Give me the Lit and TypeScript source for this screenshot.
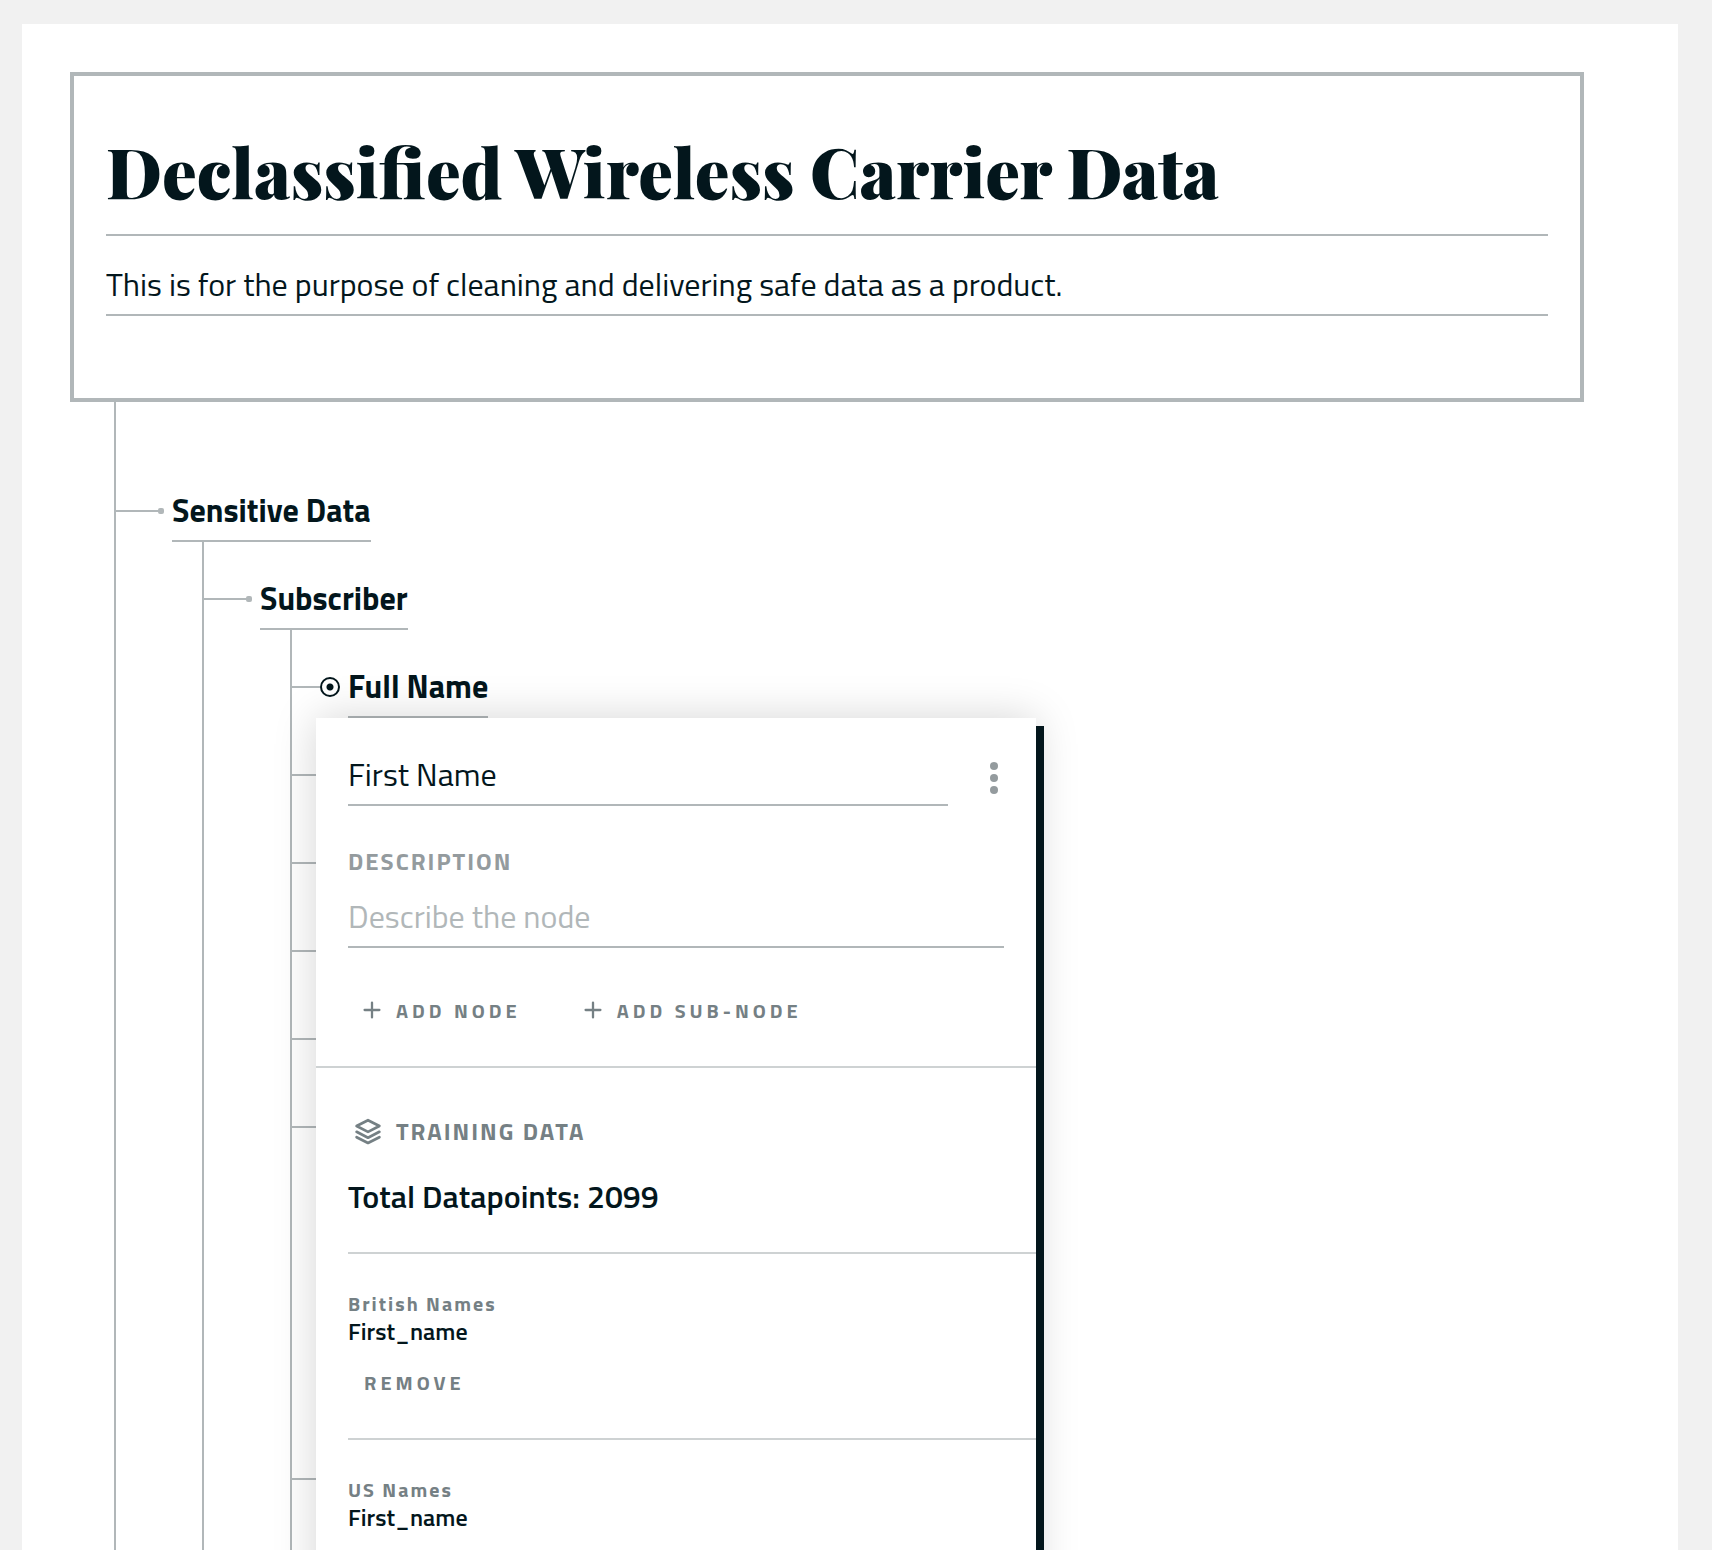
import { LitElement, html, css, svg, nothing, TemplateResult } from "lit";
import { customElement, property } from "lit/decorators.js";
import { classMap } from "lit/directives/class-map.js";

interface TreeNode {
  name?: string;
  selected?: boolean;
  open?: boolean;
  children?: TreeNode[];
}

interface Dataset {
  source: string;
  field: string;
  removable: boolean;
}

const TREE: TreeNode[] = [
  {
    name: "Sensitive Data",
    children: [
      {
        name: "Subscriber",
        children: [
          { name: "Full Name", selected: true },
          { open: true },
          {},
          {},
          {},
          { children: [{}, {}, {}] },
          {},
        ],
      },
    ],
  },
];

const DATASETS: Dataset[] = [
  { source: "British Names", field: "First_name", removable: true },
  { source: "US Names", field: "First_name", removable: false },
];

const plusIcon = svg`<svg class="icon" width="24" height="24" viewBox="0 0 24 24" fill="none" stroke="currentColor" stroke-width="2.3" stroke-linecap="round" aria-hidden="true"><path d="M12 4.6v14.8M4.6 12h14.8"/></svg>`;

const layersIcon = svg`<svg class="icon" width="32" height="32" viewBox="0 0 32 32" fill="none" stroke="currentColor" stroke-width="2.7" stroke-linejoin="round" stroke-linecap="round" aria-hidden="true"><path d="M16 5.2 27.4 11 16 16.9 4.6 11z"/><path d="M4.6 16.8 16 22.7l11.4-5.9"/><path d="M4.6 22.2 16 28l11.4-5.8"/></svg>`;

const moreIcon = svg`<svg class="icon" width="20" height="32" viewBox="0 0 20 32" fill="currentColor" aria-hidden="true"><circle cx="10" cy="4" r="4"/><circle cx="10" cy="16" r="4"/><circle cx="10" cy="28" r="4"/></svg>`;

const shared = css`
  *,
  *::before {
    box-sizing: border-box;
  }
  input,
  button {
    margin: 0;
    padding: 0;
    border: 0;
    border-radius: 0;
    background: none;
    font: inherit;
    color: inherit;
    outline: none;
  }
  button {
    cursor: pointer;
  }
  .field {
    display: block;
    width: 100%;
    min-width: 0;
    height: 56px;
    padding-bottom: 6px;
    border-bottom: 2px solid var(--line);
    font-size: 32px;
    line-height: 48px;
  }
  .field::placeholder {
    color: var(--line);
    opacity: 1;
  }
`;

@customElement("node-panel")
export class NodePanel extends LitElement {
  static styles = [
    shared,
    css`
      :host {
        display: block;
        min-height: 100vh;
        background: #fff;
        box-shadow: 8px 8px 0 var(--ink), 0 0 40px rgba(0, 0, 0, 0.17);
      }
      .details {
        padding: 32px 32px 36px;
        border-bottom: 2px solid var(--rule);
      }
      .name-row {
        display: grid;
        grid-template-columns: 1fr 56px;
      }
      .more {
        display: flex;
        align-items: center;
        justify-content: flex-end;
        color: var(--soft);
      }
      .icon {
        display: block;
        flex: none;
      }
      .label {
        display: block;
        margin: 40px 0 16px;
        color: var(--soft);
      }
      .label,
      .section-title {
        font-size: 24px;
        font-weight: 700;
        line-height: 30px;
        letter-spacing: 2px;
      }
      .actions {
        display: flex;
        gap: 36px;
        margin-top: 42px;
      }
      .action {
        display: flex;
        align-items: center;
        gap: 12px;
        height: 40px;
        padding: 0 12px;
        color: var(--muted);
        font-size: 20px;
        font-weight: 700;
        letter-spacing: 4px;
      }
      .action.text {
        margin-top: 18px;
        padding: 0 16px;
      }
      .training {
        padding-left: 32px;
      }
      .summary {
        padding: 48px 0 30px;
        border-bottom: 2px solid var(--rule);
      }
      .section-title {
        display: flex;
        align-items: center;
        gap: 12px;
        height: 30px;
        margin: 0;
        padding-left: 4px;
        color: var(--muted);
      }
      .total {
        margin: 24px 0 0;
        font-size: 32px;
        font-weight: 600;
        line-height: 52px;
      }
      .sets {
        margin: 0;
        padding: 0;
        list-style: none;
      }
      .set {
        padding: 36px 0;
      }
      .set:not(:last-child) {
        border-bottom: 2px solid var(--rule);
      }
      .source,
      .target {
        margin: 0;
      }
      .source {
        color: var(--muted);
        font-size: 20px;
        font-weight: 700;
        line-height: 28px;
        letter-spacing: 2px;
      }
      .target {
        font-size: 24px;
        font-weight: 600;
        line-height: 26px;
      }
    `,
  ];

  render() {
    return html`
      <section class="details">
        <div class="name-row">
          <input class="field" type="text" aria-label="Node name" .value=${"First Name"} />
          <button class="more" type="button" aria-label="More options">${moreIcon}</button>
        </div>
        <label class="label" for="description">DESCRIPTION</label>
        <input class="field" id="description" type="text" placeholder="Describe the node" />
        <div class="actions">
          <button class="action" type="button">${plusIcon}<span>ADD NODE</span></button>
          <button class="action" type="button">${plusIcon}<span>ADD SUB-NODE</span></button>
        </div>
      </section>
      <section class="training">
        <div class="summary">
          <h2 class="section-title">${layersIcon}<span>TRAINING DATA</span></h2>
          <p class="total">Total Datapoints: 2099</p>
        </div>
        <ul class="sets">
          ${DATASETS.map(
            (d) => html`<li class="set">
              <p class="source">${d.source}</p>
              <p class="target">${d.field}</p>
              ${d.removable ? html`<button class="action text" type="button">REMOVE</button>` : nothing}
            </li>`
          )}
        </ul>
      </section>
    `;
  }
}

@customElement("node-tree")
export class NodeTree extends LitElement {
  @property({ attribute: false }) nodes: TreeNode[] = [];

  static styles = [
    shared,
    css`
      :host {
        display: flex;
        flex-direction: column;
        flex: 1;
        padding-left: 44px;
      }
      .branch {
        margin: 0 0 0 86px;
        padding: 0;
        border-left: 2px solid var(--line);
        list-style: none;
      }
      .branch.root {
        flex: 1;
        margin-left: 0;
        padding-top: 52px;
      }
      .node {
        position: relative;
        padding-top: 32px;
      }
      .node:last-child > .branch {
        min-height: 100vh;
      }
      .row {
        display: flex;
        height: 56px;
      }
      .stub {
        display: flex;
        align-items: center;
        width: 48px;
        height: 50px;
        margin-right: 8px;
      }
      .stub::before {
        content: "";
        flex: 1;
        height: 2px;
        background: var(--line);
      }
      .dot {
        width: 6px;
        height: 6px;
        border-radius: 2px;
        background: var(--line);
      }
      .radio {
        appearance: none;
        width: 20px;
        height: 20px;
        border: 2px solid var(--ink);
        border-radius: 50%;
        background: radial-gradient(circle, var(--ink) 0 3px, transparent 4px);
      }
      .name {
        border-bottom: 2px solid var(--line);
        padding-bottom: 6px;
        font-size: 32px;
        font-weight: 700;
        line-height: 48px;
      }
      .panel {
        position: absolute;
        top: 0;
        left: 24px;
        z-index: 1;
        width: 720px;
      }
    `,
  ];

  private renderNode(node: TreeNode): TemplateResult {
    return html`<li class="node">
      <div class="row">
        <span class="stub">
          ${node.selected
            ? html`<input class="radio" type="radio" checked aria-label=${node.name ?? ""} />`
            : html`<span class="dot"></span>`}
        </span>
        ${node.name ? html`<button class="name" type="button">${node.name}</button>` : nothing}
      </div>
      ${node.open ? html`<node-panel class="panel"></node-panel>` : nothing}
      ${node.children ? this.renderBranch(node.children) : nothing}
    </li>`;
  }

  private renderBranch(nodes: TreeNode[], root = false): TemplateResult {
    return html`<ul class=${classMap({ branch: true, root })}>
      ${nodes.map((n) => this.renderNode(n))}
    </ul>`;
  }

  render() {
    return this.renderBranch(this.nodes, true);
  }
}

@customElement("app-root")
export class AppRoot extends LitElement {
  static styles = [
    shared,
    css`
      :host {
        --ink: #03161c;
        --line: #b1b7b9;
        --rule: #ced2d3;
        --muted: #758084;
        --soft: #949b9e;
        display: flex;
        box-sizing: border-box;
        height: 100vh;
        overflow: hidden;
        padding: 24px 34px 0 22px;
        background: #f1f1f1;
        color: var(--ink);
        font-family: "Titillium Web", "Roboto", "Liberation Sans", sans-serif;
      }
      .sheet {
        display: flex;
        flex-direction: column;
        flex: 1;
        min-width: 0;
        padding: 48px 94px 0 48px;
        background: #fff;
      }
      .header {
        flex: none;
        padding: 50px 32px 82px;
        border: 4px solid var(--line);
      }
      .heading {
        margin: 0 0 24px;
        font-weight: 400;
      }
      .field.title {
        height: 110px;
        padding-bottom: 20px;
        font-family: "Playfair Display", "Liberation Serif", serif;
        font-size: 69px;
        font-weight: 900;
        line-height: 88px;
      }
    `,
  ];

  render() {
    return html`
      <main class="sheet">
        <header class="header">
          <h1 class="heading">
            <input class="field title" type="text" aria-label="Title" .value=${"Declassified Wireless Carrier Data"} />
          </h1>
          <input
            class="field"
            type="text"
            aria-label="Purpose"
            .value=${"This is for the purpose of cleaning and delivering safe data as a product."}
          />
        </header>
        <node-tree .nodes=${TREE}></node-tree>
      </main>
    `;
  }
}
